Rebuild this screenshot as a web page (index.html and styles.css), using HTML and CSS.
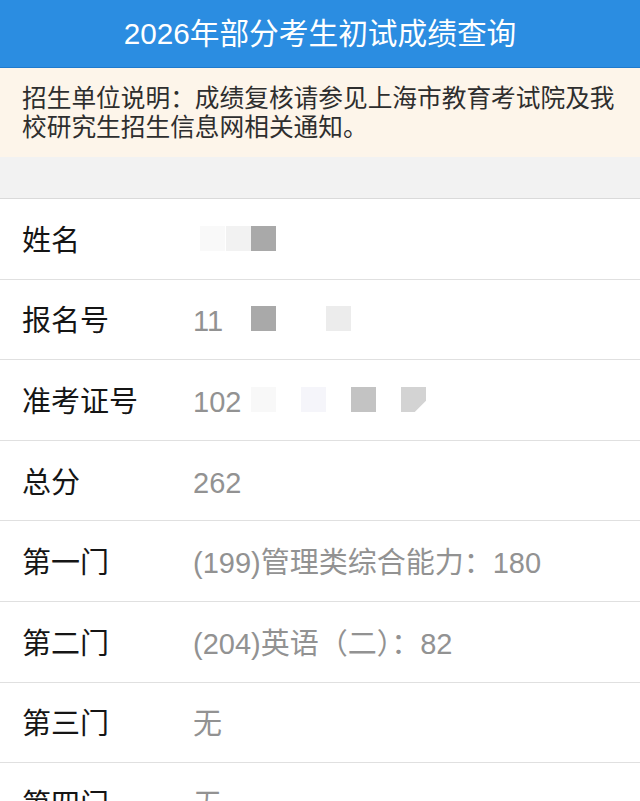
FILE: index.html
```html
<!DOCTYPE html>
<html lang="zh-CN">
<head>
<meta charset="utf-8">
<title>2026年部分考生初试成绩查询</title>
<link rel="stylesheet" href="styles.css">
</head>
<body>
<header class="topbar">
  <h1 class="title">2026年部分考生初试成绩查询</h1>
</header>
<div class="notice">招生单位说明：成绩复核请参见上海市教育考试院及我校研究生招生信息网相关通知。</div>
<div class="gap"></div>
<ul class="list">
  <li class="row">
    <span class="label">姓名</span>
    <span class="value">
      <span class="masks">
        <i class="mask c1 m-faint1"></i>
        <i class="mask c2 m-faint2"></i>
        <i class="mask c3 m-dark"></i>
      </span>
    </span>
  </li>
  <li class="row">
    <span class="label">报名号</span>
    <span class="value">11
      <span class="masks">
        <i class="mask c3 m-dark"></i>
        <i class="mask c6 m-light"></i>
      </span>
    </span>
  </li>
  <li class="row">
    <span class="label">准考证号</span>
    <span class="value">102
      <span class="masks">
        <i class="mask c3 m-faint3"></i>
        <i class="mask c5 m-faint4"></i>
        <i class="mask c7 m-mid"></i>
        <i class="mask c9 m-cut"></i>
      </span>
    </span>
  </li>
  <li class="row">
    <span class="label">总分</span>
    <span class="value">262</span>
  </li>
  <li class="row">
    <span class="label">第一门</span>
    <span class="value">(199)管理类综合能力：180</span>
  </li>
  <li class="row">
    <span class="label">第二门</span>
    <span class="value">(204)英语（二）：82</span>
  </li>
  <li class="row">
    <span class="label">第三门</span>
    <span class="value">无</span>
  </li>
  <li class="row">
    <span class="label">第四门</span>
    <span class="value">无</span>
  </li>
</ul>
</body>
</html>
```

FILE: styles.css
```css
* {
  box-sizing: border-box;
}

html, body {
  margin: 0;
  padding: 0;
  background: #ffffff;
}

body {
  font-family: "Liberation Sans", "Noto Sans CJK SC", sans-serif;
  color: #111111;
}

.topbar {
  height: 68px;
  background: #2b8de1;
  border-bottom: 1px solid #1f7acd;
}

.title {
  margin: 0;
  height: 67px;
  line-height: 67px;
  text-align: center;
  color: #ffffff;
  font-size: 29.7px;
  font-weight: normal;
}

.notice {
  background: #fdf5ea;
  padding: 16px 22px 15px 22px;
  font-size: 24.7px;
  line-height: 29px;
  color: #2e2e2e;
}

.gap {
  height: 41px;
  background: #f2f2f2;
}

.list {
  list-style: none;
  margin: 0;
  padding: 0;
  border-top: 1px solid #dadada;
}

.row {
  display: flex;
  align-items: center;
  height: 80.6px;
  border-bottom: 1px solid #e0e0e0;
  padding-top: 4px;
}

.label {
  flex: none;
  width: 193px;
  padding-left: 22px;
  font-size: 29px;
  line-height: 36px;
  color: #151515;
}

.value {
  position: relative;
  display: block;
  height: 36px;
  font-size: 29px;
  line-height: 36px;
  color: #929292;
  white-space: nowrap;
}

.masks {
  position: absolute;
  left: 7px;
  top: 3px;
  display: grid;
  grid-template-columns: repeat(9, 25px);
  grid-template-rows: 25px;
}

.mask {
  display: block;
  width: 25px;
  height: 25px;
  grid-row: 1;
}

.c1 { grid-column: 1; }
.c2 { grid-column: 2; margin-left: 1px; }
.c3 { grid-column: 3; margin-left: 1px; }
.c5 { grid-column: 5; margin-left: 1px; }
.c6 { grid-column: 6; margin-left: 1px; }
.c7 { grid-column: 7; margin-left: 1px; }
.c9 { grid-column: 9; margin-left: 1px; }

.m-faint1 { background: #f9f9f9; }
.m-faint2 { background: #f2f2f2; }
.m-dark { background: #a9a9a9; }
.m-light { background: #ececec; }
.m-faint3 { background: #f8f8f8; }
.m-faint4 { background: #f5f5fa; }
.m-mid { background: #c3c3c3; }
.m-cut {
  background: #d3d3d3;
  clip-path: polygon(0 0, 100% 0, 100% 55%, 55% 100%, 0 100%);
}
```
